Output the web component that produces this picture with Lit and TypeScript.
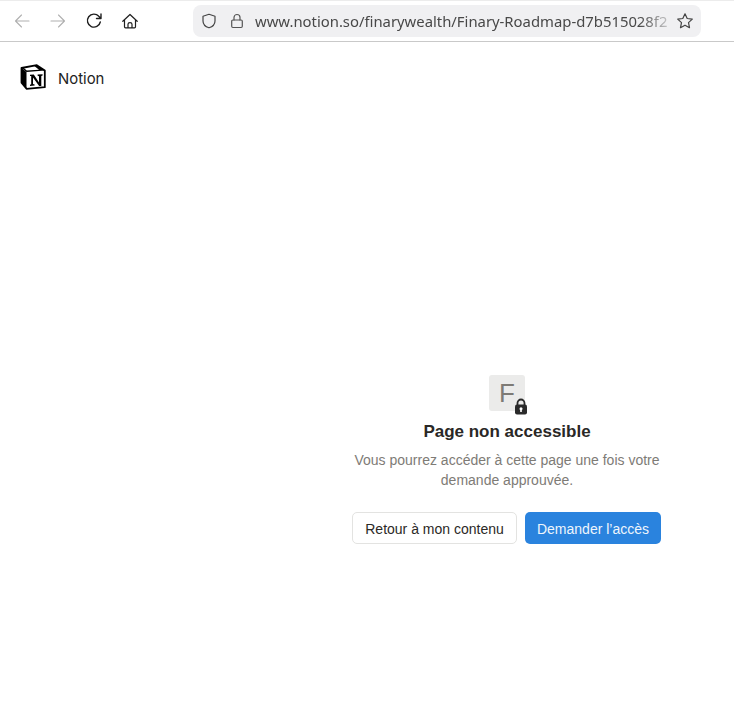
import { LitElement, html, css, svg } from "lit";
import { customElement } from "lit/decorators.js";

const icon = (body: unknown, cls = "") => html`<svg class="ico ${cls}" width="16" height="16" viewBox="0 0 16 16" fill="none" stroke="currentColor" stroke-width="1.2" stroke-linecap="round" stroke-linejoin="round">${body}</svg>`;

@customElement("app-root")
export class AppRoot extends LitElement {
  static styles = css`
    :host { display: block; width: 734px; height: 726px; background: #fff; overflow: hidden; font-family: "Liberation Sans", Arial, sans-serif; }
    .toolbar { height: 41px; border-bottom: 1px solid #c9c9c9; display: flex; align-items: center; box-sizing: content-box; position: relative; }
    .toolbar::before { content: ""; position: absolute; left: 0; right: 0; top: 0; height: 1px; background: #ececec; }
    .nav { display: flex; align-items: center; padding-left: 14px; gap: 20px; width: 193px; box-sizing: border-box; color: #1f1f1f; }
    .ico { display: block; flex: none; }
    .off { color: #b0b0b0; }
    .urlbar { width: 508px; height: 32px; border-radius: 8px; background: #f0f0f2; display: flex; align-items: center; padding: 0 8px; box-sizing: border-box; color: #444; }
    .shield { margin-right: 12px; }
    .lock { margin-right: 10px; color: #555; }
    .url { width: 413px; white-space: nowrap; font: 14.85px/20px "Noto Sans", sans-serif; color: #484848; flex: none;
      -webkit-mask-image: linear-gradient(to right, #000 93%, rgba(0,0,0,.25) 100%); mask-image: linear-gradient(to right, #000 93%, rgba(0,0,0,.25) 100%); }
    .star { margin-left: 8px; width: 18px; height: 18px; color: #444; }
    .brand { display: flex; align-items: center; gap: 12px; padding: 23px 0 0 20px; height: 28px; color: #37352f; }
    .brand span { font-family: "Inter", sans-serif; font-size: 14.9px; color: #222; }
    .logo { display: block; margin-top: -4px; }
    .main { width: 310px; margin: 282px 0 0 352px; display: flex; flex-direction: column; align-items: center; }
    .tile { width: 36px; height: 36px; border-radius: 3px; background: #ebebea; color: #7d7a75; font-size: 26px; line-height: 37px; text-align: center; position: relative; }
    .badge { position: absolute; right: -3px; bottom: -4px; width: 14px; height: 17px; }
    h1 { margin: 12px 0 0; font-size: 17px; line-height: 18px; font-weight: 700; color: #2a2826; height: 20px; }
    p { margin: 7px 0 0; font-size: 14px; line-height: 20px; color: #7e7b76; text-align: center; }
    .actions { margin-top: 22px; display: flex; gap: 8px; width: 100%; }
    button { height: 32px; border-radius: 5px; font: 14px "Liberation Sans", Arial, sans-serif; padding: 1px 0 0; box-sizing: border-box; }
    .ghost { width: 165px; background: #fff; border: 1px solid #e3e3e1; color: #2b2926; }
    .primary { width: 136px; background: #2a83de; border: none; color: #eef5fc; }
  `;

  render() {
    return html`
      <div class="toolbar">
        <div class="nav">
          ${icon(svg`<path d="M15 8H1.500M7.500 2 1.500 8l6 6" stroke-width="1.100"/>`, "off")}
          ${icon(svg`<path d="M1 8H14.500M8.500 2l6 6-6 6" stroke-width="1.100"/>`, "off")}
          ${icon(svg`<path d="M14.300 9A6.500 6.500 0 1 1 12.800 3.300L14.800 5.400M15 1v4.500h-4.500" stroke-width="1.400"/>`)}
          ${icon(svg`<path d="M.8 8.300 8 1.500l7.200 6.800M2.500 7v6.800c0 .6.400 1 1 1h9c.6 0 1-.4 1-1V7M6 14.800v-3.600c0-.9.700-1.600 2-1.600s2 .7 2 1.600v3.600" stroke-width="1.200"/>`)}
        </div>
        <div class="urlbar">
          ${icon(svg`<path d="M8 1.300 14 3.200V8c0 3.500-2.800 5.800-6 6.800C4.800 13.800 2 11.500 2 8V3.200Z"/>`, "shield")}
          ${icon(svg`<rect x="2.700" y="7" width="10.600" height="7.500" rx="1.200"/><path d="M5 7V4.500a3 3 0 0 1 6 0V7"/>`, "lock")}
          <div class="url">www.notion.so/finarywealth/Finary-Roadmap-d7b515028f2</div>
          <svg class="ico star" viewBox="0 0 18 18" fill="none" stroke="currentColor" stroke-width="1.200" stroke-linejoin="round"><path d="M9 1.800 11.200 6.500 16.300 7.100 12.500 10.600 13.500 15.700 9 13.200 4.500 15.700 5.500 10.600 1.700 7.100 6.800 6.500Z"/></svg>
        </div>
      </div>
      <div class="brand">
        <svg class="logo" width="26" height="26" viewBox="0 0 26 26">
          <path d="M1.500 4 16.800 1.200 24.800 6.500V23.200L6.500 24.800 1.500 18.600Z" fill="#fff" stroke="#000" stroke-width="1.800" stroke-linejoin="round"/>
          <path d="M1.500 4 6.500 8 24.800 6.500 16.800 1.200 14 1.700 19 5.700 6.800 6.500 3.800 4Z" fill="#000"/>
          <path d="M1.500 4 6.500 8V24.800L1.500 18.600Z" fill="#000"/>
          <path d="M10 10.800 13.800 10.600 19 18.400V12.200L17.600 11.800V10.600L22.600 10.300V11.500L21.300 11.900V22L19.100 22.100 13 13.400V19.900L14.600 20.400V21.600L10 21.900V20.700L11.200 20.300V12.100L10 11.900Z" fill="#000"/>
        </svg>
        <span>Notion</span>
      </div>
      <div class="main">
        <div class="tile">F
          <svg class="badge" viewBox="0 0 14 17"><path d="M3.500 7.500V5a3.500 3.500 0 0 1 7 0v2.500" fill="none" stroke="#2a2a2a" stroke-width="1.800"/><rect x="1" y="6.500" width="12" height="10" rx="2" fill="#2a2a2a"/><circle cx="7" cy="10.800" r="1.500" fill="#fff"/><rect x="6.200" y="11" width="1.600" height="3" fill="#fff"/></svg>
        </div>
        <h1>Page non accessible</h1>
        <p>Vous pourrez accéder à cette page une fois votre<br>demande approuvée.</p>
        <div class="actions">
          <button class="ghost">Retour à mon contenu</button>
          <button class="primary">Demander l’accès</button>
        </div>
      </div>
    `;
  }
}
